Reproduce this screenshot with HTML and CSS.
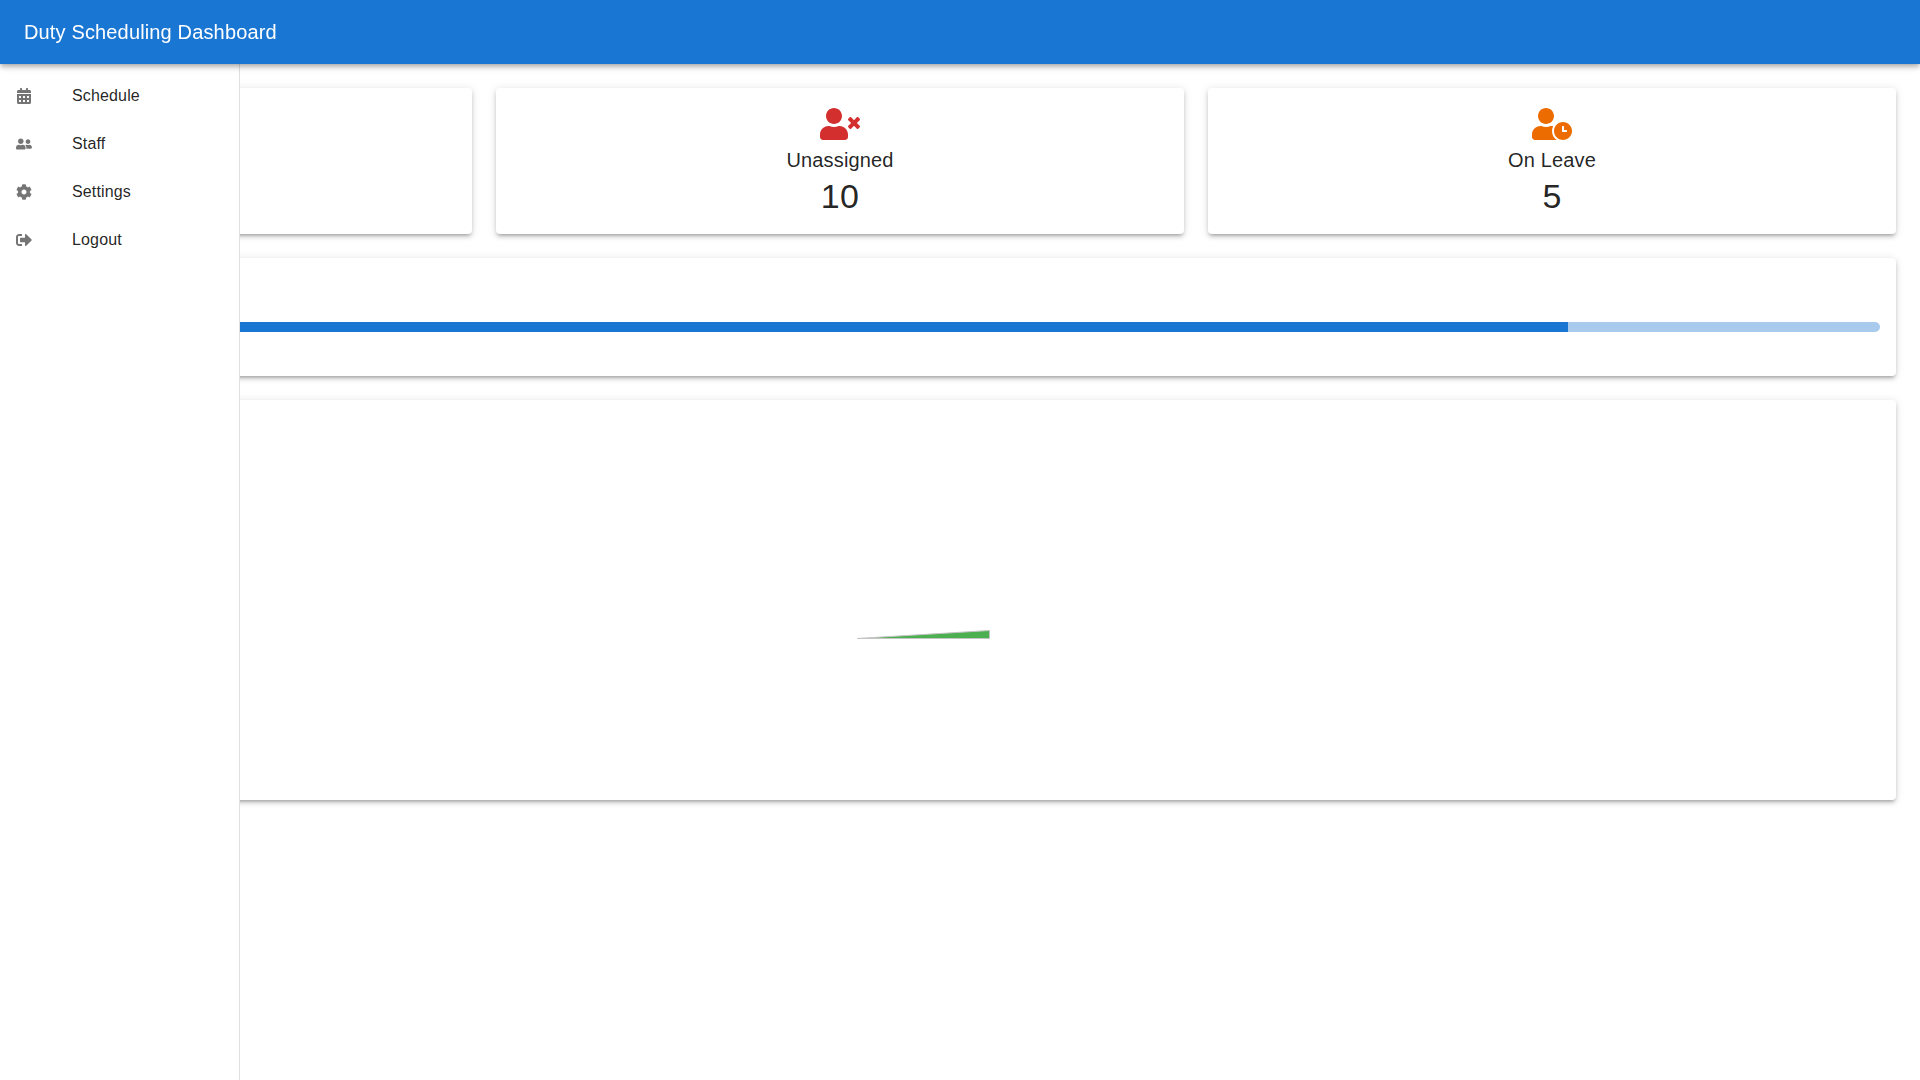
FILE: index.html
```
<!DOCTYPE html>
<html lang="en">
<head>
    <meta charset="UTF-8">
    <meta name="viewport" content="width=device-width, initial-scale=1.0">
    <title>Duty Scheduling Dashboard</title>
    <link rel="stylesheet" href="styles.css">
</head>
<body>
    <header class="app-bar">
        <h1 class="app-title">Duty Scheduling Dashboard</h1>
    </header>

    <nav class="drawer">
        <ul class="nav-list">
            <li class="nav-item">
                <span class="nav-icon">
                    <svg viewBox="0 0 448 512"><path d="M0 464c0 26.500 21.500 48 48 48h352c26.500 0 48-21.500 48-48V192H0v272zm320-196c0-6.600 5.400-12 12-12h40c6.600 0 12 5.400 12 12v40c0 6.600-5.400 12-12 12h-40c-6.600 0-12-5.400-12-12v-40zm0 128c0-6.600 5.400-12 12-12h40c6.600 0 12 5.400 12 12v40c0 6.600-5.400 12-12 12h-40c-6.600 0-12-5.400-12-12v-40zM192 268c0-6.600 5.400-12 12-12h40c6.600 0 12 5.400 12 12v40c0 6.600-5.400 12-12 12h-40c-6.600 0-12-5.400-12-12v-40zm0 128c0-6.600 5.400-12 12-12h40c6.600 0 12 5.400 12 12v40c0 6.600-5.400 12-12 12h-40c-6.600 0-12-5.400-12-12v-40zM64 268c0-6.600 5.400-12 12-12h40c6.600 0 12 5.400 12 12v40c0 6.600-5.400 12-12 12H76c-6.600 0-12-5.400-12-12v-40zm0 128c0-6.600 5.400-12 12-12h40c6.600 0 12 5.400 12 12v40c0 6.600-5.400 12-12 12H76c-6.600 0-12-5.400-12-12v-40zM400 64h-48V16c0-8.800-7.200-16-16-16h-32c-8.800 0-16 7.200-16 16v48H160V16c0-8.800-7.200-16-16-16h-32c-8.800 0-16 7.200-16 16v48H48C21.500 64 0 85.500 0 112v48h448v-48c0-26.500-21.500-48-48-48z"/></svg>
                </span>
                <span class="nav-text">Schedule</span>
            </li>
            <li class="nav-item">
                <span class="nav-icon">
                    <svg viewBox="0 0 640 512"><path d="M192 256c61.900 0 112-50.100 112-112S253.900 32 192 32 80 82.100 80 144s50.100 112 112 112zm76.800 32h-8.300c-20.800 10-43.900 16-68.500 16s-47.600-6-68.500-16h-8.300C51.600 288 0 339.600 0 403.200V432c0 26.500 21.500 48 48 48h288c26.500 0 48-21.500 48-48v-28.800c0-63.600-51.600-115.200-115.200-115.200zM480 256c53 0 96-43 96-96s-43-96-96-96-96 43-96 96 43 96 96 96zm48 32h-3.800c-13.900 4.800-28.600 8-44.200 8s-30.300-3.200-44.200-8H432c-20.400 0-39.200 5.900-55.700 15.400 24.400 26.300 39.700 61.200 39.700 99.800v38.400c0 2.200-.5 4.300-.6 6.400H592c26.500 0 48-21.500 48-48 0-61.900-50.100-112-112-112z"/></svg>
                </span>
                <span class="nav-text">Staff</span>
            </li>
            <li class="nav-item">
                <span class="nav-icon">
                    <svg viewBox="0 0 512 512"><path d="M487.400 315.700l-42.600-24.600c4.300-23.200 4.300-47 0-70.200l42.600-24.600c4.900-2.800 7.100-8.600 5.500-14-11.100-35.600-30-67.800-54.700-94.600-3.800-4.100-10-5.100-14.800-2.300L380.800 110c-17.900-15.400-38.500-27.300-60.800-35.100V25.800c0-5.600-3.900-10.500-9.400-11.700-36.700-8.200-74.300-7.800-109.200 0-5.500 1.200-9.400 6.100-9.400 11.700V75c-22.200 7.900-42.800 19.800-60.800 35.100L88.700 85.500c-4.900-2.800-11-1.900-14.800 2.300-24.700 26.700-43.600 58.900-54.700 94.600-1.700 5.400.6 11.200 5.500 14L67.300 221c-4.300 23.200-4.300 47 0 70.200l-42.600 24.600c-4.900 2.800-7.100 8.600-5.500 14 11.100 35.600 30 67.800 54.700 94.600 3.800 4.100 10 5.100 14.800 2.300l42.600-24.600c17.900 15.400 38.500 27.300 60.800 35.100v49.200c0 5.600 3.900 10.500 9.400 11.700 36.700 8.200 74.300 7.800 109.200 0 5.500-1.200 9.400-6.100 9.400-11.700v-49.200c22.200-7.900 42.800-19.800 60.800-35.100l42.600 24.600c4.900 2.800 11 1.900 14.800-2.300 24.700-26.700 43.600-58.900 54.700-94.600 1.500-5.500-.7-11.300-5.600-14.100zM256 336c-44.100 0-80-35.900-80-80s35.900-80 80-80 80 35.900 80 80-35.900 80-80 80z"/></svg>
                </span>
                <span class="nav-text">Settings</span>
            </li>
            <li class="nav-item">
                <span class="nav-icon">
                    <svg viewBox="0 0 512 512"><path d="M497 273L329 441c-15 15-41 4.500-41-17v-96H152c-13.300 0-24-10.700-24-24v-96c0-13.300 10.700-24 24-24h136V88c0-21.400 25.900-32 41-17l168 168c9.300 9.400 9.300 24.600 0 34zM192 436v-40c0-6.600-5.400-12-12-12H96c-17.700 0-32-14.300-32-32V160c0-17.700 14.300-32 32-32h84c6.600 0 12-5.400 12-12V76c0-6.600-5.400-12-12-12H96c-53 0-96 43-96 96v192c0 53 43 96 96 96h84c6.600 0 12-5.400 12-12z"/></svg>
                </span>
                <span class="nav-text">Logout</span>
            </li>
        </ul>
    </nav>

    <main class="content">
        <div class="stats-grid">
            <div class="card stat-card"></div>

            <div class="card stat-card">
                <div class="stat-icon unassigned">
                    <svg viewBox="0 0 640 512"><path d="M589.600 240l45.600-45.600c6.300-6.300 6.300-16.500 0-22.800l-22.800-22.800c-6.300-6.300-16.500-6.300-22.800 0L544 194.400l-45.600-45.600c-6.300-6.300-16.500-6.300-22.800 0l-22.800 22.800c-6.300 6.300-6.300 16.500 0 22.800l45.600 45.600-45.600 45.600c-6.300 6.300-6.300 16.500 0 22.800l22.800 22.800c6.300 6.300 16.500 6.300 22.800 0l45.600-45.600 45.600 45.600c6.300 6.300 16.500 6.300 22.800 0l22.800-22.800c6.300-6.300 6.300-16.500 0-22.800L589.600 240zM224 256c70.700 0 128-57.300 128-128S294.700 0 224 0 96 57.300 96 128s57.300 128 128 128zm89.600 32h-16.700c-22.200 10.200-46.900 16-72.900 16s-50.600-5.800-72.900-16h-16.700C60.200 288 0 348.200 0 422.400V464c0 26.500 21.500 48 48 48h352c26.500 0 48-21.500 48-48v-41.600c0-74.200-60.200-134.400-134.400-134.400z"/></svg>
                </div>
                <h2 class="stat-label">Unassigned</h2>
                <p class="stat-value">10</p>
            </div>

            <div class="card stat-card">
                <div class="stat-icon on-leave">
                    <svg viewBox="0 0 640 512"><path d="M496 224c-79.600 0-144 64.400-144 144s64.400 144 144 144 144-64.400 144-144-64.400-144-144-144zm64 150.300c0 5.300-4.400 9.700-9.700 9.700h-60.600c-5.300 0-9.700-4.400-9.700-9.700v-76.600c0-5.300 4.400-9.700 9.700-9.700h12.600c5.300 0 9.700 4.400 9.700 9.700V352h38.300c5.300 0 9.700 4.400 9.700 9.700v12.600zM320 368c0-27.800 6.700-54.100 18.200-77.500-8-1.500-16.200-2.500-24.600-2.500h-16.700c-22.200 10.200-46.900 16-72.900 16s-50.600-5.800-72.900-16h-16.700C60.200 288 0 348.200 0 422.400V464c0 26.500 21.500 48 48 48h347.100c-45.300-31.900-75.100-84.500-75.100-144zm-96-112c70.700 0 128-57.300 128-128S294.700 0 224 0 96 57.300 96 128s57.300 128 128 128z"/></svg>
                </div>
                <h2 class="stat-label">On Leave</h2>
                <p class="stat-value">5</p>
            </div>
        </div>

        <div class="card progress-card">
            <div class="progress">
                <div class="progress-bar" style="width: 85%"></div>
            </div>
        </div>

        <div class="card chart-card">
            <svg class="chart" viewBox="0 0 300 300">
                <path class="slice" d="M167 150.500L299.500 142.500V150.500Z"/>
            </svg>
        </div>
    </main>
</body>
</html>
```
FILE: styles.css
```
* {
    box-sizing: border-box;
    margin: 0;
    padding: 0;
}

body {
    font-family: "Liberation Sans", Arial, sans-serif;
    font-size: 16px;
    line-height: 1.5;
    background: #fff;
    color: rgba(0,0,0,0.87);
    overflow-x: hidden;
}

.app-bar {
    position: sticky;
    top: 0;
    z-index: 20;
    display: flex;
    align-items: center;
    height: 64px;
    padding: 0 24px;
    background: #1976d2;
    color: #fff;
    box-shadow: 0 2px 4px -1px rgba(0,0,0,0.2), 0 4px 5px rgba(0,0,0,0.14), 0 1px 10px rgba(0,0,0,0.12);
}

.app-title {
    font-size: 20px;
    font-weight: 400;
    line-height: 1.6;
    letter-spacing: 0.0075em;
}

/* Drawer sits over the left part of the content */
.drawer {
    position: fixed;
    top: 0;
    bottom: 0;
    left: 0;
    z-index: 10;
    width: 240px;
    padding-top: 64px;
    background: #fff;
    border-right: 1px solid rgba(0,0,0,0.12);
}

.nav-list {
    list-style: none;
    padding: 8px 0;
}

.nav-item {
    display: flex;
    align-items: center;
    height: 48px;
    padding: 0 16px;
    cursor: pointer;
}

.nav-icon {
    display: flex;
    width: 56px;
    color: rgba(0,0,0,0.54);
}

.nav-icon svg {
    width: 16px;
    height: 16px;
    fill: currentColor;
}

.nav-text {
    letter-spacing: 0.00938em;
}

.content {
    display: flex;
    flex-direction: column;
    gap: 24px;
    margin-left: -240px;
    padding: 24px;
}

.stats-grid {
    display: grid;
    grid-template-columns: repeat(3, 1fr);
    gap: 24px;
}

.card {
    padding: 16px;
    background: #fff;
    border-radius: 4px;
    box-shadow: 0 3px 3px -2px rgba(0,0,0,0.2), 0 3px 4px rgba(0,0,0,0.14), 0 1px 8px rgba(0,0,0,0.12);
}

.stat-card {
    height: 146px;
    text-align: center;
}

.stat-icon {
    display: flex;
    align-items: center;
    justify-content: center;
    height: 40px;
}

.stat-icon svg {
    width: 40px;
    height: 32px;
    fill: currentColor;
}

.unassigned {
    color: #d32f2f;
}

.on-leave {
    color: #ed6c02;
}

.stat-label {
    font-size: 20px;
    font-weight: 400;
    line-height: 32px;
    letter-spacing: 0.0075em;
}

.stat-value {
    font-size: 34px;
    line-height: 40px;
    letter-spacing: 0.00735em;
}

.progress-card {
    height: 118px;
    padding-top: 64px;
}

.progress {
    height: 10px;
    overflow: hidden;
    background: #a7caed;
    border-radius: 5px;
}

.progress-bar {
    height: 100%;
    background: #1976d2;
}

.chart-card {
    display: flex;
    justify-content: center;
    height: 400px;
    padding-top: 88px;
}

.chart {
    width: 300px;
    height: 300px;
}

.slice {
    fill: #4caf50;
    stroke: #c4c4c4;
    stroke-width: 1;
    stroke-linejoin: bevel;
}
```
